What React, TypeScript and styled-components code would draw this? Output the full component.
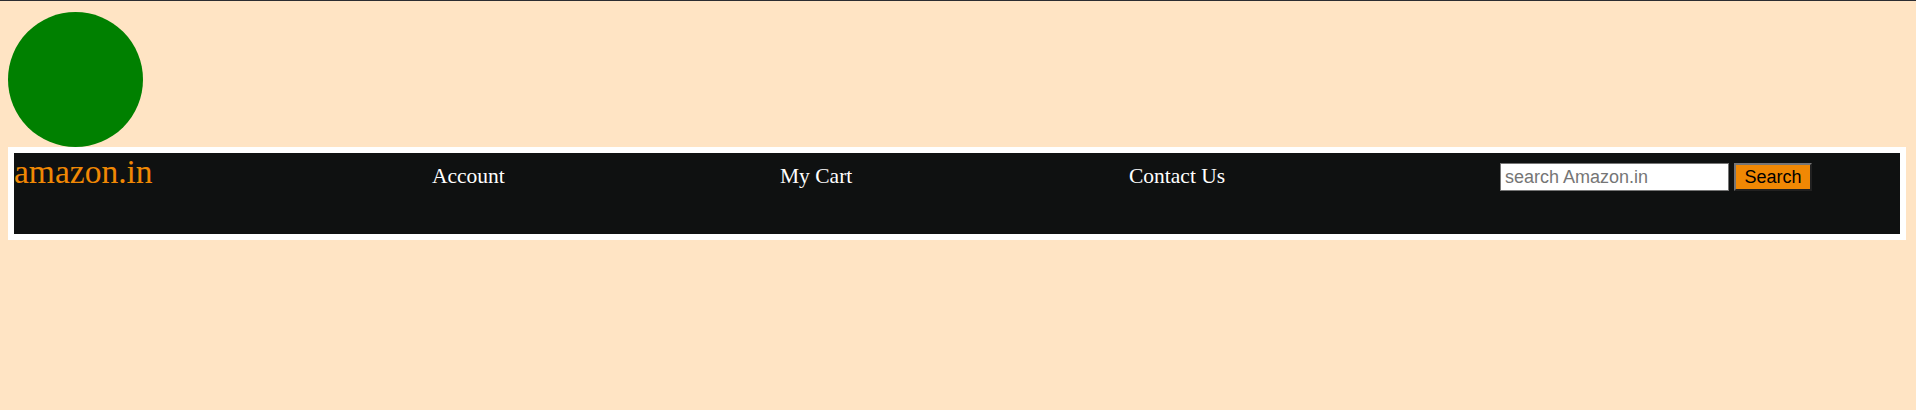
import React from "react";
import styled, { createGlobalStyle } from "styled-components";

const Global = createGlobalStyle`
  html {
    border-top: 1px solid #2c2c31;
    background: #ffe4c4;
  }
  body {
    margin: 8px;
    background: #ffe4c4;
    font-family: "Liberation Serif", "Times New Roman", serif;
  }
`;

const Page = styled.div`
  padding-top: 3px;
`;

const Circle = styled.div`
  width: 135px;
  height: 135px;
  border-radius: 50%;
  background: #008000;
`;

const NavBar = styled.nav`
  box-sizing: border-box;
  width: 1898px;
  height: 93px;
  border: 6px solid #ffffff;
  background: #0f1111;
  display: grid;
  grid-template-columns: 418px 348px 349px 371px 1fr;
  align-items: start;
`;

const Logo = styled.div`
  color: #f08804;
  font-size: 33.5px;
  line-height: normal;
`;

const NavLink = styled.a`
  color: #ffffff;
  font-size: 21.5px;
  text-decoration: none;
  margin-top: 11px;
`;

const SearchForm = styled.form`
  display: flex;
  align-items: center;
  gap: 5px;
  margin-top: 10px;
`;

const SearchInput = styled.input`
  box-sizing: border-box;
  width: 229px;
  height: 28px;
  font-family: "Liberation Sans", Arial, sans-serif;
  font-size: 18px;
  padding: 1px 4px;
  border: 1px solid #767676;
  background: #ffffff;
  color: #000;
  outline: none;
  &::placeholder {
    color: #757575;
  }
`;

const SearchButton = styled.button`
  box-sizing: border-box;
  width: 78px;
  height: 28px;
  font-family: "Liberation Sans", Arial, sans-serif;
  font-size: 18px;
  color: #000;
  background: #f08804;
  border: 2px outset #767676;
  padding: 0 6px;
`;

export default function App() {
  return (
    <>
      <Global />
      <Page>
        <Circle />
        <NavBar>
          <Logo>amazon.in</Logo>
          <NavLink href="#">Account</NavLink>
          <NavLink href="#">My Cart</NavLink>
          <NavLink href="#">Contact Us</NavLink>
          <SearchForm onSubmit={(e) => e.preventDefault()}>
            <SearchInput type="text" placeholder="search Amazon.in" />
            <SearchButton type="submit">Search</SearchButton>
          </SearchForm>
        </NavBar>
      </Page>
    </>
  );
}
